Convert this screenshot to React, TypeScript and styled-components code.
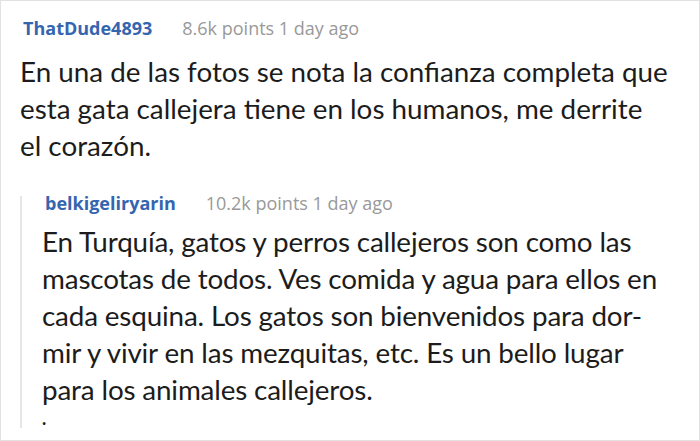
import styled, { createGlobalStyle } from "styled-components"

const GlobalStyle = createGlobalStyle`
 html, body {
  margin: 0;
  padding: 0;
  background: #fff;
 }
`

const comment = {
 user: "ThatDude4893",
 meta: "8.6k points 1 day ago",
 lines: [
  "En una de las fotos se nota la confianza completa que",
  "esta gata callejera tiene en los humanos, me derrite",
  "el corazón."
 ]
}

const reply = {
 user: "belkigeliryarin",
 meta: "10.2k points 1 day ago",
 lines: [
  "En Turquía, gatos y perros callejeros son como las",
  "mascotas de todos. Ves comida y agua para ellos en",
  "cada esquina. Los gatos son bienvenidos para dor-",
  "mir y vivir en las mezquitas, etc. Es un bello lugar",
  "para los animales callejeros."
 ]
}

const App = () => (
 <>
  <GlobalStyle />
  <Card>
   <Header>
    <User>{comment.user}</User>
    <Meta>{comment.meta}</Meta>
   </Header>
   <Body>
    {comment.lines.map((l, i) => (
     <Line key={i}>{l}</Line>
    ))}
   </Body>
   <Reply>
    <Header>
     <User>{reply.user}</User>
     <Meta>{reply.meta}</Meta>
    </Header>
    <Body>
     {reply.lines.map((l, i) => (
      <Line key={i}>{l}</Line>
     ))}
     <Dot>.</Dot>
    </Body>
   </Reply>
  </Card>
 </>
)

export default App

const Card = styled.div`
 box-sizing: border-box;
 width: 700px;
 height: 441px;
 border: 1px solid #e2e2e2;
 padding: 20px 0 0 19px;
 overflow: hidden;
`

const Header = styled.div`
 display: flex;
 align-items: baseline;
 gap: 30px;
 height: 14px;
 padding-left: 3px;
 font-family: "Open Sans", sans-serif;
 font-size: 18px;
 line-height: 14px;
 white-space: nowrap;
`

const User = styled.span`
 color: #3665b0;
 font-weight: 700;
`

const Meta = styled.span`
 color: #999;
`

const Body = styled.div`
 margin-top: 18px;
 font-family: "Lato", sans-serif;
 font-size: 27.8px;
 line-height: 37px;
 color: #1c1c1c;
`

const Line = styled.div`
 white-space: nowrap;
`

const Dot = styled.div`
 height: 20px;
 font-size: 18px;
 font-weight: 700;
 line-height: 20px;
`

const Reply = styled.div`
 box-sizing: border-box;
 margin-top: 32px;
 padding-left: 20px;
 border-left: 2px solid #e6e6e6;
 height: 232px;

 ${Body} {
  margin-top: 13px;
  letter-spacing: -0.15px;
 }
`
